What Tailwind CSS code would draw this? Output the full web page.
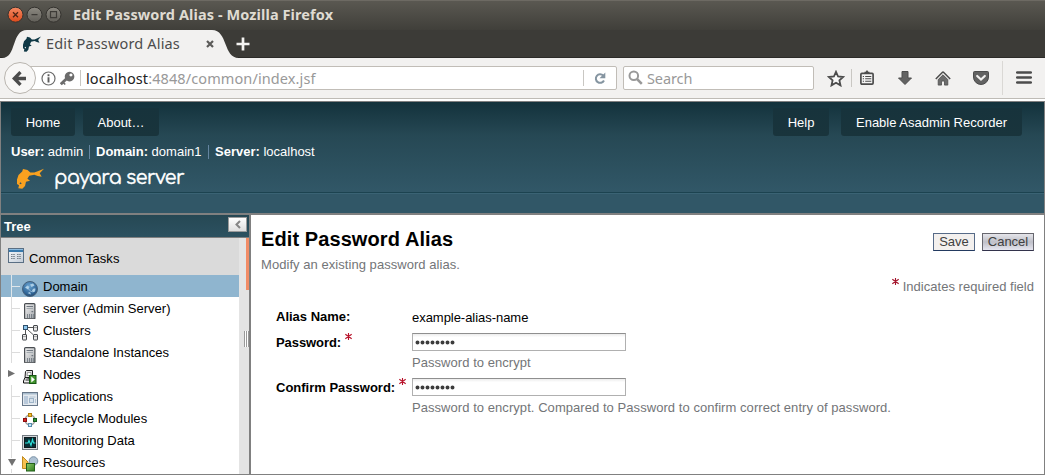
<!DOCTYPE html>
<html lang="en">
<head>
<meta charset="utf-8">
<title>Edit Password Alias</title>
<script src="https://cdn.jsdelivr.net/npm/@tailwindcss/browser@4"></script>
</head>
<body class="w-[1045px] h-[475px] overflow-hidden bg-white font-['Liberation_Sans',Arial,sans-serif] text-[13px] leading-[15px] text-black">
<svg class="absolute size-0">
  <defs>
    <linearGradient id="close" x1="0" y1="0" x2="0" y2="1"><stop offset="0" stop-color="#f58a63"/><stop offset="1" stop-color="#dd4a1b"/></linearGradient>
    <linearGradient id="grey" x1="0" y1="0" x2="0" y2="1"><stop offset="0" stop-color="#8d8a82"/><stop offset="1" stop-color="#605e58"/></linearGradient>
    <radialGradient id="globe" cx=".45" cy=".3" r=".8"><stop offset="0" stop-color="#6aa3d0"/><stop offset=".6" stop-color="#336a9c"/><stop offset="1" stop-color="#1c3f63"/></radialGradient>
    <linearGradient id="win" x1="0" y1="0" x2="1" y2="1"><stop offset="0" stop-color="#f7f9fb"/><stop offset="1" stop-color="#c3cdd8"/></linearGradient>
    <linearGradient id="case" x1="0" y1="0" x2="1" y2="1"><stop offset="0" stop-color="#f2f2f2"/><stop offset="1" stop-color="#a4a8ac"/></linearGradient>
    <linearGradient id="cube" x1="0" y1="0" x2="1" y2="1"><stop offset="0" stop-color="#8cc96a"/><stop offset="1" stop-color="#2f7d1c"/></linearGradient>
    <symbol id="fish" viewBox="0 0 27 21"><path fill-rule="evenodd" d="M6 1L5.200 3.500 1.500 7 0 11.500V16l2 1.300-.7 2.900 4 .6L8 18l1-4.200 4-1.100-2.600-2 1.800-3 5.100-1 3.400 1.300 4 .7-2-3.400L27 .7l-6.300 2.600-3.400 1.200-4 .1L10.500 2zM3.300 14.200l1.400 1-1 1.100-1.300-.8z"/></symbol>
    <symbol id="server" viewBox="0 0 12 17"><rect x=".6" y=".6" width="10.300" height="15.300" rx="1" fill="url(#case)" stroke="#4a4e52" stroke-width="1.200"/><path d="M2.500 3.500h6.500" stroke="#6f7780"/><path d="M2.500 5.500h6.500" stroke="#a1a8ae"/><path d="M7.500 8h1.700v1.200H7.500z" fill="#6d767e"/><path d="M3.500 11v4M5.500 11v4M7.500 11v4M9.300 11v4" stroke="#727b83" stroke-width=".9"/></symbol>
  </defs>
</svg>

<!-- Window title bar -->
<div class="flex h-[30px] items-center bg-linear-to-b from-[#5b5952] to-[#403f3a] pl-[7px] shadow-[inset_0_1px_0_#6d6a63]">
  <svg width="56" height="18" viewBox="0 0 56 18">
    <circle cx="8.500" cy="8.700" r="7.500" fill="url(#close)" stroke="#34322e"/>
    <circle cx="27.500" cy="8.700" r="7.500" fill="url(#grey)" stroke="#34322e"/>
    <circle cx="46.500" cy="8.700" r="7.500" fill="url(#grey)" stroke="#34322e"/>
    <path d="M6 6.200l5 5M11 6.200l-5 5" stroke="#4b2415" stroke-width="1.300"/>
    <path d="M24.500 8.700h6M43.500 5.700h6v6h-6z" fill="none" stroke="#3d3b37" stroke-width="1.200"/>
  </svg>
  <div class="ml-[10px] -mt-[2px] whitespace-nowrap font-['Noto_Sans',sans-serif] text-[14.500px] leading-[20px] font-bold text-[#dfdbd2] tracking-[0.1px]">Edit Password Alias - Mozilla Firefox</div>
</div>

<!-- Tab strip -->
<div class="relative flex h-[28px] border-b border-[#2c2b28] bg-[#3c3b37]">
  <svg class="absolute left-0 top-0" width="244" height="28" viewBox="0 0 244 28"><path d="M2 28C17 28 11 0 27 0H212C228 0 223 28 239 28Z" fill="#f2f1f0"/></svg>
  <div class="relative flex w-full items-center">
    <svg class="ml-[23px] text-[#0f3845]" width="18" height="16" viewBox="0 0 27 21" preserveAspectRatio="none" fill="currentColor"><use href="#fish" width="27" height="21"/></svg>
    <span class="ml-[5px] -mt-[1px] w-[150px] whitespace-nowrap font-['Noto_Sans',sans-serif] text-[14.500px] leading-[20px] text-[#4c4c4c] tracking-[0.16px]">Edit Password Alias</span>
    <svg class="ml-[10px]" width="8" height="8" viewBox="0 0 8 8"><path d="M1 1l6 6M7 1L1 7" stroke="#5c5b59" stroke-width="2.200"/></svg>
    <svg class="ml-[22px]" width="14" height="14" viewBox="0 0 14 14"><path d="M7 0.500v13M.5 7h13" stroke="#f4f3f1" stroke-width="2.700"/></svg>
  </div>
</div>

<!-- Navigation toolbar -->
<div class="flex h-[41px] items-center border-b border-[#bebbb6] bg-[#f2f1f0] font-['Noto_Sans',sans-serif]">
  <div class="relative z-10 ml-[4px] flex size-[32px] shrink-0 items-center justify-center rounded-full border border-[#b9b5af] bg-[#f8f7f6]">
    <svg width="16" height="15" viewBox="0 0 16 15"><path d="M8.500 1.200L2.300 7.500l6.200 6.300M2.500 7.500H14" fill="none" stroke="#4c4c4c" stroke-width="3.300"/></svg>
  </div>
  <div class="-ml-[8px] flex h-[24px] w-[589px] items-center border border-[#c1bdb7] bg-white pl-[12px] rounded-r-[2px]">
    <svg width="15" height="15" viewBox="0 0 15 15"><circle cx="7.500" cy="7.500" r="6.500" fill="none" stroke="#6c6c6c" stroke-width="1.200"/><path d="M7.500 3.200v2M7.500 6.300v5.200" stroke="#5c5c5c" stroke-width="1.900"/></svg>
    <svg class="ml-[4px]" width="15" height="15" viewBox="0 0 15 15"><path d="M.8 13.300L7 7.200" stroke="#6c6c6c" stroke-width="2.800"/><path d="M3.200 11.500l2 2" stroke="#6c6c6c" stroke-width="1.700"/><path fill-rule="evenodd" d="M9.500.8a4.800 4.800 0 1 0 .1 0zM11 2.500a1.500 1.500 0 1 1-.1 0z" fill="#6c6c6c"/></svg>
    <div class="ml-[5px] h-[16px] w-px bg-[#c9c7c3]"></div>
    <div class="ml-[5px] grow whitespace-nowrap text-[14.500px] leading-[20px] text-[#999] tracking-[0.1px]"><span class="text-[#222]">localhost</span>:4848/common/index.jsf</div>
    <div class="h-[16px] w-px bg-[#c9c7c3]"></div>
    <svg class="ml-[10px] mr-[10px]" width="12" height="13" viewBox="0 0 12 13"><path d="M9.200 3.500A4.300 4.300 0 1 0 10 8.500" fill="none" stroke="#8595a1" stroke-width="2"/><path d="M11.300.5v5.800H5.500z" fill="#8595a1"/></svg>
  </div>
  <div class="ml-[6px] flex h-[24px] w-[191px] items-center rounded-[2px] border border-[#c1bdb7] bg-white pl-[4px]">
    <svg class="-mt-[2px]" width="15" height="15" viewBox="0 0 15 15"><circle cx="5.800" cy="5.800" r="4.300" fill="none" stroke="#999" stroke-width="2"/><path d="M9 9l4.800 4.800" stroke="#999" stroke-width="2.500"/></svg>
    <span class="ml-[4px] text-[14.500px] leading-[20px] text-[#999] tracking-[-0.1px]">Search</span>
  </div>
  <svg class="ml-[13px]" width="18" height="17" viewBox="0 0 18 17"><path d="M9 1.800l2.100 4.700 5.100.5-3.800 3.400 1.100 5L9 12.800l-4.500 2.600 1.100-5L1.800 7l5.100-.5z" fill="#f8f8f8" stroke="#4c4c4c" stroke-width="1.800"/></svg>
  <div class="ml-[6px] h-[18px] w-px bg-[#c9c7c3]"></div>
  <svg class="ml-[8px] -mt-[2px]" width="14" height="15" viewBox="0 0 14 15"><path d="M4.500 3V1.800h1.200L7 0l1.300 1.800h1.200V3z" fill="#4c4c4c"/><rect x=".9" y="3.400" width="12.200" height="10.700" rx="1" fill="#f4f4f4" stroke="#4c4c4c" stroke-width="1.700"/><path d="M2.800 6.500h1.200M2.800 8.800h1.200M2.800 11.200h1.200M5.200 6.500H11.300M5.200 8.800H11.300M5.200 11.200H11.300" stroke="#4c4c4c" stroke-width="1.100"/></svg>
  <svg class="ml-[24px]" width="14" height="14" viewBox="0 0 14 14"><path d="M4 .5h6V7h3.500L7 13.500.5 7H4z" fill="#626262" stroke="#4c4c4c"/></svg>
  <svg class="ml-[23px]" width="16" height="15" viewBox="0 0 16 15"><path d="M8 .8L.8 8M8 .8L15.200 8" stroke="#4c4c4c" stroke-width="1.500"/><path d="M8 3.800l4.800 4.800v5.500H9.500v-4h-3v4H3.200V8.600z" fill="#6c6c6c" stroke="#4c4c4c" stroke-width=".8"/></svg>
  <svg class="ml-[22px]" width="16" height="14" viewBox="0 0 16 14"><path d="M1.500.5h13q1 0 1 1V6a7.500 7.500 0 0 1-15 0V1.500q0-1 1-1z" fill="#626262" stroke="#4c4c4c"/><path d="M4.200 5L8 8.600 11.800 5" fill="none" stroke="#f2f1f0" stroke-width="2.200" stroke-linecap="round"/></svg>
  <div class="ml-[13px] h-[34px] w-px bg-[#dad8d5]"></div>
  <svg class="ml-[13px] -mt-[1px]" width="16" height="13" viewBox="0 0 16 13"><path d="M1.200 1.500h13.600M1.200 6.500h13.600M1.200 11.500h13.600" stroke="#4c4c4c" stroke-width="2.600" stroke-linecap="round"/></svg>
</div>

<!-- Page frames -->
<div class="mt-[2px] h-[374px] border border-[#808080]">
  <header class="flex h-[111px] flex-col bg-linear-to-b from-[#13323c] from-0% via-[#264854] via-30% to-[#315767] to-80% text-white">
    <div class="flex h-[34px] items-end pl-[10px] pr-[22px]">
      <div class="flex h-[28px] w-[64px] items-center justify-center rounded-b-[3px] bg-linear-to-b from-[#17333c] to-[#19343c] pt-px">Home</div>
      <div class="ml-[8px] flex h-[28px] w-[76px] items-center justify-center rounded-b-[3px] bg-linear-to-b from-[#17333c] to-[#19343c] pt-px">About…</div>
      <div class="ml-auto flex h-[28px] w-[56px] items-center justify-center rounded-b-[3px] bg-linear-to-b from-[#17333c] to-[#19343c] pt-px">Help</div>
      <div class="ml-[12px] flex h-[28px] w-[181px] items-center justify-center rounded-b-[3px] bg-linear-to-b from-[#17333c] to-[#19343c] pt-px">Enable Asadmin Recorder</div>
    </div>
    <div class="mt-[8px] flex items-center pl-[10px] whitespace-pre">
      <span class="w-[78px]"><b>User:</b> admin</span><i class="mr-[6px] h-[14px] w-px bg-[#6485a0]"></i><span class="w-[112px]"><b>Domain:</b> domain1</span><i class="mr-[6px] h-[14px] w-px bg-[#6485a0]"></i><span><b>Server:</b> localhost</span>
    </div>
    <div class="flex h-[34px] items-start border-b border-[#1c4350] pl-[16px] pt-[9px]">
      <svg class="text-[#f9a11f]" width="27" height="21" fill="currentColor"><use href="#fish" width="27" height="21"/></svg>
      <span class="ml-[10px] whitespace-nowrap font-[Comfortaa,Lato,sans-serif] text-[19px] leading-[20px] tracking-[-0.500px] [-webkit-text-stroke:0.4px_white]">payara server</span>
    </div>
    <div class="grow border-t border-[#3a6374] bg-[#315767]"></div>
  </header>
  <div class="flex h-[261px] border-t-2 border-[#808080]">
    <!-- Navigation tree -->
    <aside class="relative h-full w-[250px] shrink-0 overflow-hidden border-r-2 border-[#808080]">
      <div class="flex h-[23px] items-start justify-between border-b border-[#808080] bg-linear-to-b from-[#264854] to-[#2c5160] pl-[3px] pt-[2px] pr-[2px]">
        <b class="pt-[2px] text-white">Tree</b>
        <div class="flex h-[15px] w-[19px] items-center justify-center border border-[#9a9a9a] bg-linear-to-b from-white to-[#dedede]"><svg width="6" height="9" viewBox="0 0 6 9"><path d="M5 1L1.500 4.500 5 8" fill="none" stroke="#858585" stroke-width="2"/></svg></div>
      </div>
      <div class="flex">
        <div class="w-[238px]">
          <div class="flex h-[37px] bg-[#dadada] pl-[7px] pt-[10px]">
            <svg width="16" height="15" viewBox="0 0 16 15"><rect x=".5" y=".5" width="15" height="14" fill="url(#win)" stroke="#5a6f84"/><path d="M1 1h14v3H1z" fill="#3779ad"/><path d="M1 1.500h14" stroke="#8bbbe0"/><path d="M3 6.500h4M3 8.500h4M3 10.500h4M9 6.500h4M9 8.500h4M9 10.500h4" stroke="#77828c" stroke-dasharray="1.600 .6"/></svg>
            <span class="ml-[5px] mt-[3px] tracking-[0.1px]">Common Tasks</span>
          </div>
          <div class="grid auto-rows-[22px]">
            <div class="flex bg-[#8fb5cf]"><svg class="shrink-0" width="42" height="22"><path d="M10.500 0v22M10.500 11.500H19" stroke="#dfe6ea"/><circle cx="29" cy="14" r="7.500" fill="url(#globe)" stroke="#46627c"/><path d="M24 12.500l2.500-2 2 1.500-1.500 2.500zM29 9.500l3-1 1.500 2-3 1.500zM31.500 14.500l3-1-.5 3-2.500 1zM26.500 18l2.500-1 1 2.500z" fill="#a9cde6"/><path d="M25.500 12l5 5 3-4" stroke="#c6dff0" stroke-width=".6" fill="none"/></svg><span class="mt-[4px]">Domain</span></div>
            <div class="flex"><svg class="shrink-0" width="42" height="22"><path d="M10.500 0v22M10.500 11.500H19" stroke="#dcdcdc"/><use href="#server" x="23" y="6" width="12" height="17"/></svg><span class="mt-[4px] tracking-[0.02px]">server (Admin Server)</span></div>
            <div class="flex"><svg class="shrink-0" width="42" height="22"><path d="M10.500 0v22M10.500 11.500H19" stroke="#dcdcdc"/><path d="M27 8.500h5M26.500 10.500l5.500 5M24.500 11v4" stroke="#555" fill="none"/><g fill="#e6e6e6" stroke="#45494d"><rect x="22.500" y="6.500" width="4" height="4" fill="#8cc6ee" stroke="#2f4f6b"/><rect x="32.500" y="6.500" width="4" height="5.500" rx=".5"/><rect x="21.500" y="15.500" width="4" height="5.500" rx=".5"/><rect x="32.500" y="15.500" width="4" height="5.500" rx=".5"/></g><path d="M33 8.500h3M22 17.500h3M33 17.500h3" stroke="#999" stroke-width=".8"/></svg><span class="mt-[4px]">Clusters</span></div>
            <div class="flex"><svg class="shrink-0" width="42" height="22"><path d="M10.500 0v22M10.500 11.500H19" stroke="#dcdcdc"/><use href="#server" x="23" y="6" width="12" height="17"/></svg><span class="mt-[4px] tracking-[0.05px]">Standalone Instances</span></div>
            <div class="flex"><svg class="shrink-0" width="42" height="22"><path d="M7 7v7l7-3.500z" fill="#717171"/><path d="M25.500 7.500h6v7h-7.500l.5-6z" fill="#e4e4e4" stroke="#222"/><path d="M26.500 9.500h3.500v3h-4z" fill="#fff" stroke="#777" stroke-width=".7"/><path d="M24 14.500l-1.500 3.500v2h7v-4.500z" fill="#eee" stroke="#111"/><path d="M24.500 17h4" stroke="#222"/><rect x="28.500" y="12.500" width="6.500" height="8" fill="#43952f" stroke="#155713"/><path d="M30.300 13.500v6l3.500-3z" fill="#fff"/></svg><span class="mt-[4px]">Nodes</span></div>
            <div class="flex"><svg class="shrink-0" width="42" height="22"><path d="M10.500 0v22M10.500 11.500H19" stroke="#dcdcdc"/><rect x="21.500" y="7.500" width="15" height="13" fill="#e3e9ef" stroke="#68788a"/><path d="M22 8h14v1.500H22z" fill="#a8bccd"/><path d="M23 11h4v8h-4z" fill="#b9c9da"/><path d="M28.500 12h6M34.500 14v4" stroke="#b1c2d2"/><rect x="28.500" y="13.500" width="4" height="4" fill="#d6e1eb" stroke="#9db3c7"/></svg><span class="mt-[4px]">Applications</span></div>
            <div class="flex"><svg class="shrink-0" width="42" height="22"><path d="M10.500 0v22M10.500 11.500H19" stroke="#dcdcdc"/><circle cx="29" cy="13" r="5" fill="none" stroke="#9a9a9a" stroke-width="1.300"/><rect x="27.500" y="6.500" width="3" height="3" fill="#f4bd35" stroke="#b17b08"/><rect x="22.500" y="11.500" width="3" height="3" fill="#d62626" stroke="#8d0d0d"/><rect x="32.500" y="11.500" width="3" height="3" fill="#319536" stroke="#14591b"/><rect x="27.500" y="16.500" width="3" height="3" fill="#c9e6f8" stroke="#568cad"/></svg><span class="mt-[4px] tracking-[0.05px]">Lifecycle Modules</span></div>
            <div class="flex"><svg class="shrink-0" width="42" height="22"><path d="M10.500 0v22M10.500 11.500H19" stroke="#dcdcdc"/><rect x="21.500" y="6.500" width="15" height="14" fill="#d3d8dc" stroke="#737b82"/><rect x="23.500" y="8.500" width="11" height="10" fill="#062e35" stroke="#10191d"/><path d="M24 14h3l1-2.500 2 5 1.500-6 1 3.500h2" fill="none" stroke="#2fe3dc" stroke-width="1.100"/></svg><span class="mt-[4px]">Monitoring Data</span></div>
            <div class="flex"><svg class="shrink-0" width="42" height="22"><path d="M10.500 0v7M10.500 18v4" stroke="#dcdcdc"/><path d="M7 8h8l-4 7z" fill="#717171"/><path d="M21.500 5.500v12H27V11z" fill="#f6c04f" stroke="#c28b20"/><circle cx="32.500" cy="10" r="4.300" fill="#adc1d3" stroke="#7a91a6"/><rect x="25.500" y="12.500" width="8" height="7.500" fill="url(#cube)" stroke="#22601b"/></svg><span class="mt-[4px]">Resources</span></div>
          </div>
        </div>
        <div class="h-[237px] w-[10px] bg-[#e4e4e4]"><div class="ml-auto h-[52px] w-[3px] bg-[#f18c66]"></div></div>
      </div>
      <div class="absolute right-0 top-[116px] flex h-[16px] w-[5px] justify-between bg-white"><i class="w-px bg-[#999]"></i><i class="w-px bg-[#999]"></i><i class="w-px bg-[#999]"></i></div>
    </aside>

    <!-- Alias form -->
    <main class="grow bg-white pl-[10px] pr-[10px] text-[#737578]">
      <div class="flex h-[42px] justify-between pt-[12px]">
        <h1 class="text-[20px] leading-[24px] font-bold text-black tracking-[0.09px]">Edit Password Alias</h1>
        <div class="mt-[6px] flex gap-[7px] text-[#404040]">
          <button class="flex h-[18px] w-[42px] items-center justify-center border border-[#576b88] border-b-[#233a60] bg-[#f3f0ee] pb-px">Save</button>
          <button class="flex h-[18px] w-[52px] items-center justify-center border border-[#67676f] border-b-[#33334c] bg-linear-to-b from-[#e5e5ea] via-[#bfc0c9] to-[#e6e6f0] pb-px">Cancel</button>
        </div>
      </div>
      <p class="tracking-[0.05px]">Modify an existing password alias.</p>
      <div class="mt-[7px] flex h-[15px] justify-end gap-[4px]">
        <svg class="mt-[-1px]" width="7" height="7" viewBox="0 0 7 7"><path d="M3.500 0v7M.3 1.300l6.400 4.400M6.700 1.300L.3 5.700" stroke="#a3122a" stroke-width="1.100"/></svg>
        <span class="tracking-[0.02px]">Indicates required field</span>
      </div>
      <div class="ml-[15px] mt-[15px] grid grid-cols-[136px_1fr] text-black">
        <b class="h-[24px]">Alias Name:</b>
        <span class="pt-px tracking-[-0.04px]">example-alias-name</span>
        <div class="flex h-[45px] gap-[4px] pt-[2px]"><b class="tracking-[-0.08px]">Password:</b><svg class="-mt-[2px]" width="7" height="7" viewBox="0 0 7 7"><path d="M3.500 0v7M.3 1.300l6.400 4.400M6.700 1.300L.3 5.700" stroke="#b8122a" stroke-width="1.100"/></svg></div>
        <div>
          <div class="flex h-[18px] w-[214px] items-center border border-[#b0b0b0] border-t-[#8f8f8f] bg-linear-to-b from-[#ececec] to-white to-20% pl-[2px]"><svg width="40" height="5" viewBox="0 0 40 5"><path d="M2.500 2.500h36" stroke="#3c3c3c" stroke-width="4" stroke-linecap="round" stroke-dasharray="0 5"/></svg></div>
          <p class="mt-[4px] tracking-[0.05px] text-[#737578]">Password to encrypt</p>
        </div>
        <div class="flex h-[45px] gap-[4px] pt-[2px]"><b class="whitespace-nowrap">Confirm Password:</b><svg class="-mt-[2px] shrink-0" width="7" height="7" viewBox="0 0 7 7"><path d="M3.500 0v7M.3 1.300l6.400 4.400M6.700 1.300L.3 5.700" stroke="#b8122a" stroke-width="1.100"/></svg></div>
        <div>
          <div class="flex h-[18px] w-[214px] items-center border border-[#b0b0b0] border-t-[#8f8f8f] bg-linear-to-b from-[#ececec] to-white to-20% pl-[2px]"><svg width="40" height="5" viewBox="0 0 40 5"><path d="M2.500 2.500h36" stroke="#3c3c3c" stroke-width="4" stroke-linecap="round" stroke-dasharray="0 5"/></svg></div>
          <p class="mt-[4px] whitespace-nowrap tracking-[0.055px] text-[#737578]">Password to encrypt. Compared to Password to confirm correct entry of password.</p>
        </div>
      </div>
    </main>
  </div>
</div>
</body>
</html>
